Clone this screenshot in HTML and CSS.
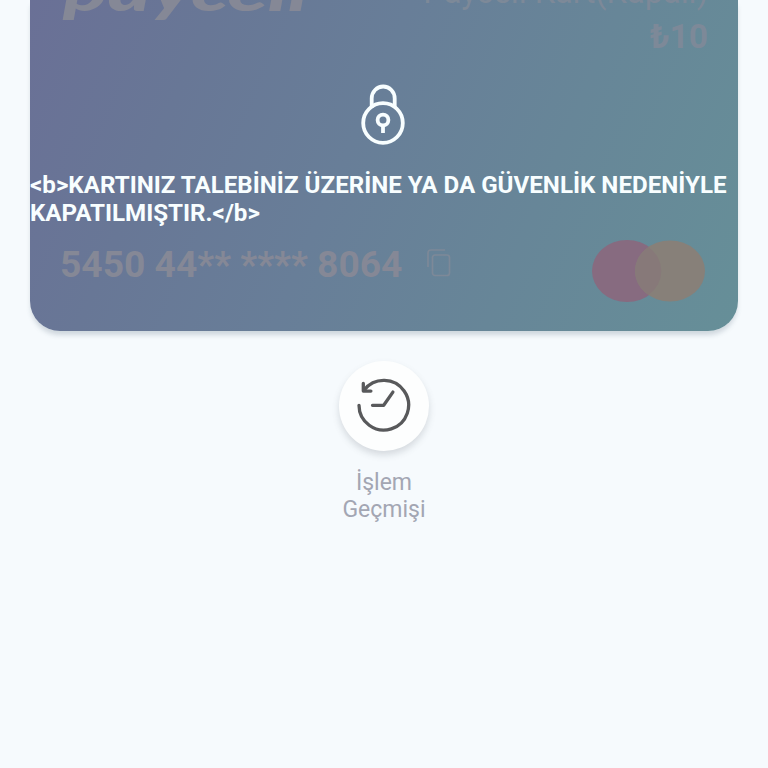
FILE: index.html
```
<!DOCTYPE html>
<html lang="tr">
<head>
<meta charset="utf-8">
<title>Paycell Kart</title>
<link rel="stylesheet" href="styles.css">
</head>
<body>
<main class="screen">
  <section class="card">
    <header class="card-top">
      <div class="brand">paycell</div>
      <div class="summary">
        <div class="name">Paycell Kart(Kapalı)</div>
        <div class="balance">₺10</div>
      </div>
    </header>
    <div class="lock">
      <svg width="48" height="64" viewBox="0 0 48 64" fill="none" stroke="#f8feff" stroke-width="3.8">
        <circle cx="24" cy="39" r="19.8"/>
        <path d="M12.7 24V14.5a11.5 12 0 0 1 23 0V24"/>
        <circle cx="24" cy="36" r="5.4"/>
        <path d="M24 41v8"/>
      </svg>
    </div>
    <p class="message"><span class="line">&lt;b&gt;KARTINIZ TALEBİNİZ ÜZERİNE YA DA GÜVENLİK NEDENİYLE</span> <span class="line">KAPATILMIŞTIR.&lt;/b&gt;</span></p>
    <div class="card-bottom">
      <span class="number">5450 44** **** 8064</span>
      <svg class="copy" width="24" height="28" viewBox="0 0 24 28" fill="none" stroke="#7d8998" stroke-width="1.7">
        <path d="M1 18V4Q1 1 4 1H18"/>
        <rect x="5.5" y="6" width="17" height="20.5" rx="2.5"/>
      </svg>
      <svg class="network" width="115" height="62" viewBox="0 0 115 62">
        <ellipse cx="35" cy="31" rx="35" ry="31" fill="#876b80"/>
        <ellipse cx="78" cy="31" rx="35" ry="30.5" fill="#878079"/>
        <path d="M56.5 7A35 31 0 0 1 56.5 55A35 30.5 0 0 1 56.5 7Z" fill="#877979"/>
      </svg>
    </div>
  </section>
  <section class="action">
    <div class="round">
      <svg width="56" height="58" viewBox="0 0 56 58" fill="none" stroke="#58595b" stroke-width="3.3" stroke-linecap="round" stroke-linejoin="round">
        <path d="M3 28.3A24.8 24.8 0 1 0 8.2 13"/>
        <path d="M7.3 6.5v7.6h7.6M16.5 28.3h11.2l9.2-13.2"/>
      </svg>
    </div>
    <div class="label">İşlem<br>Geçmişi</div>
  </section>
</main>
</body>
</html>
```
FILE: styles.css
```
* { box-sizing: border-box; }
body {
  margin: 0;
  background: #f6fafd;
  font-family: Roboto, "Noto Sans", sans-serif;
}
.screen {
  height: 768px;
  padding: 0 30px;
  overflow: hidden;
}
.card {
  height: 331px;
  border-radius: 0 0 30px 30px;
  background: linear-gradient(113deg, #6a7096 0%, #687796 22%, #687e98 45%, #678698 70%, #668f98 100%);
  box-shadow: 0 5px 5px -1px rgba(70, 90, 110, .22);
}
.card-top {
  height: 84px;
  padding: 0 30px 0 33px;
  display: flex;
  justify-content: space-between;
}
.brand {
  height: 60px;
  margin-top: -51px;
  font: italic 900 73px/70px Lato, sans-serif;
  color: #858896;
  transform: scale(1.13, .75);
  transform-origin: 0 59px;
}
.summary {
  text-align: right;
  color: #7d8998;
}
.name {
  height: 47px;
  margin-top: -27px;
  font-size: 32.6px;
  line-height: 38px;
}
.balance {
  font-size: 33.5px;
  font-weight: 700;
  line-height: 34px;
}
.lock {
  height: 87px;
  padding-right: 2px;
  text-align: center;
}
.lock svg { display: inline-block; }
.message {
  margin: 0;
  height: 57px;
  color: #f8feff;
  font-size: 24.15px;
  font-weight: 700;
  line-height: 28.3px;
  white-space: nowrap;
}
.line { display: block; }
.card-bottom {
  display: flex;
  align-items: flex-start;
  padding: 12px 31px 0 30px;
}
.number {
  font-size: 37.2px;
  line-height: 48px;
  font-weight: 700;
  color: #858896;
}
.copy { margin: 9px 0 0 25px; }
.network { margin-left: auto; }
.action {
  margin-top: 30px;
  display: flex;
  flex-direction: column;
  align-items: center;
}
.round {
  width: 90px;
  height: 90px;
  border-radius: 50%;
  background: #fdfefe;
  display: grid;
  place-items: center;
  box-shadow: 0 4px 7px rgba(80, 90, 100, .2);
}
.label {
  margin-top: 18px;
  color: #a3a6b3;
  font-size: 23px;
  line-height: 27px;
  text-align: center;
}
```
